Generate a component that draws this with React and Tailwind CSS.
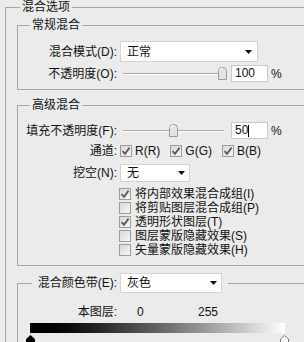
import React from "react";

const Arrow = () => (
  <svg width="7" height="4" viewBox="0 0 7 4" className="shrink-0">
    <path d="M0 0H7L3.5 4Z" fill="#111" />
  </svg>
);

const Select = ({ text, w, pr }) => (
  <div className={`flex items-center justify-between bg-white border border-[#d4d4d4] pl-[6px] ${w} ${pr} h-full`}>
    <span className="leading-[14px]">{text}</span>
    <Arrow />
  </div>
);

const Check = ({ checked }) => (
  <div className="w-[12px] h-[12px] shrink-0 border border-[#9c9c9c] bg-linear-to-br from-[#d8d8d8] to-[#f7f7f7] flex items-center justify-center">
    {checked && (
      <svg width="10" height="10" viewBox="0 0 10 10">
        <path d="M1.5 5.2L4 7.8L8.6 1.6" fill="none" stroke="#5a5a5a" strokeWidth="1.8" />
      </svg>
    )}
  </div>
);

const Thumb = () => (
  <svg width="9" height="13" viewBox="0 0 9 13">
    <path d="M0.5 3.5Q0.5 0.5 4.5 0.5Q8.5 0.5 8.5 3.5V12.5H0.5Z" fill="#e4e4e4" stroke="#9a9a9a" />
    <path d="M1.5 4Q1.5 1.5 4.5 1.5" fill="none" stroke="#fff" />
  </svg>
);

const Slider = ({ pos }) => (
  <div className="relative w-[107px] h-full flex items-center">
    <div className="mx-[3px] w-full h-[2px] border-t border-[#a8a8a8] border-b border-b-white" />
    <div className="absolute top-[2px]" style={{ left: pos }}>
      <Thumb />
    </div>
  </div>
);

const Label = ({ children }) => (
  <div className="w-[99px] text-right leading-[14px] shrink-0">{children}</div>
);

const Marker = ({ dark }) => (
  <svg width="9" height="8" viewBox="0 0 9 8">
    <path
      d="M4.5 0.5L8.5 4V7.5H0.5V4Z"
      fill={dark ? "#000" : "#fff"}
      stroke={dark ? "#000" : "#777"}
    />
  </svg>
);

export default function App() {
  return (
    <div className="w-[304px] h-[342px] overflow-hidden bg-[#ebebeb] text-[12px] text-[#111] font-['Liberation_Sans','Noto_Sans_CJK_SC',sans-serif]">
      <fieldset className="ml-[5px] w-[330px] border border-[#a6a6a6] pb-[20px]">
        <legend className="ml-[14px] px-[2px] h-[14px] leading-[14px]">混合选项</legend>

        <fieldset className="ml-[11px] mt-[4px] w-[310px] border border-[#a6a6a6] pt-[9px] pb-[7px]">
          <legend className="ml-[12px] px-[2px] h-[14px] leading-[14px]">常规混合</legend>
          <div className="flex items-center h-[21px]">
            <Label>混合模式(D):</Label>
            <div className="ml-[3px] h-full">
              <Select text="正常" w="w-[138px]" pr="pr-[5px]" />
            </div>
          </div>
          <div className="flex items-center h-[17px] mt-[3px]">
            <Label>不透明度(O):</Label>
            <div className="ml-[3px] h-full">
              <Slider pos={98} />
            </div>
            <div className="ml-[4px] w-[37px] h-full bg-white border border-[#cacaca] pl-[3px] leading-[15px]">100</div>
            <span className="ml-[3px]">%</span>
          </div>
        </fieldset>

        <fieldset className="ml-[11px] mt-[8px] w-[310px] border border-[#a6a6a6] pt-[10px] pb-[8px]">
          <legend className="ml-[12px] px-[2px] h-[14px] leading-[14px]">高级混合</legend>
          <div className="flex items-center h-[17px]">
            <Label>填充不透明度(F):</Label>
            <div className="ml-[3px] h-full">
              <Slider pos={49} />
            </div>
            <div className="ml-[4px] w-[37px] h-full bg-white border border-[#cacaca] pl-[3px] leading-[15px] flex items-center">
              <span>50</span>
              <span className="w-px h-[12px] bg-black" />
            </div>
            <span className="ml-[3px]">%</span>
          </div>
          <div className="flex items-center h-[14px] mt-[5px]">
            <Label>通道:</Label>
            <div className="ml-[3px] flex items-center gap-[10px]">
              <div className="flex items-center gap-[3px]">
                <Check checked />
                <span className="leading-[14px]">R(R)</span>
              </div>
              <div className="flex items-center gap-[3px]">
                <Check checked />
                <span className="leading-[14px]">G(G)</span>
              </div>
              <div className="flex items-center gap-[3px]">
                <Check checked />
                <span className="leading-[14px]">B(B)</span>
              </div>
            </div>
          </div>
          <div className="flex items-center h-[18px] mt-[6px]">
            <Label>挖空(N):</Label>
            <div className="ml-[3px] h-full">
              <Select text="无" w="w-[70px]" pr="pr-[4px]" />
            </div>
          </div>
          <div className="mt-[5px] ml-[101px] flex flex-col">
            {[
              ["将内部效果混合成组(I)", true],
              ["将剪贴图层混合成组(P)", false],
              ["透明形状图层(T)", true],
              ["图层蒙版隐藏效果(S)", false],
              ["矢量蒙版隐藏效果(H)", false],
            ].map(([t, c]) => (
              <div key={t} className="flex items-center gap-[4px] h-[14px]">
                <Check checked={c} />
                <span className="leading-[14px]">{t}</span>
              </div>
            ))}
          </div>
        </fieldset>

        <fieldset className="ml-[11px] mt-[7px] w-[310px] border border-[#a6a6a6] pt-[12px]">
          <legend className="ml-[14px] pl-[5px] pr-[6px] h-[20px]">
            <div className="flex items-center h-full">
              <div className="w-[80px] text-right leading-[14px]">混合颜色带(E):</div>
              <div className="ml-[3px] h-full">
                <Select text="灰色" w="w-[102px]" pr="pr-[4px]" />
              </div>
            </div>
          </legend>
          <div className="flex items-center h-[14px]">
            <Label>本图层:</Label>
            <span className="ml-[20px] w-[61px] leading-[14px]">0</span>
            <span className="leading-[14px]">255</span>
          </div>
          <div className="mt-[4px] ml-[12px] w-[255px] h-[10px] bg-linear-to-r from-black to-white" />
          <div className="mt-[2px] ml-[8px] w-[263px] flex justify-between">
            <Marker dark />
            <Marker />
          </div>
        </fieldset>
      </fieldset>
    </div>
  );
}
